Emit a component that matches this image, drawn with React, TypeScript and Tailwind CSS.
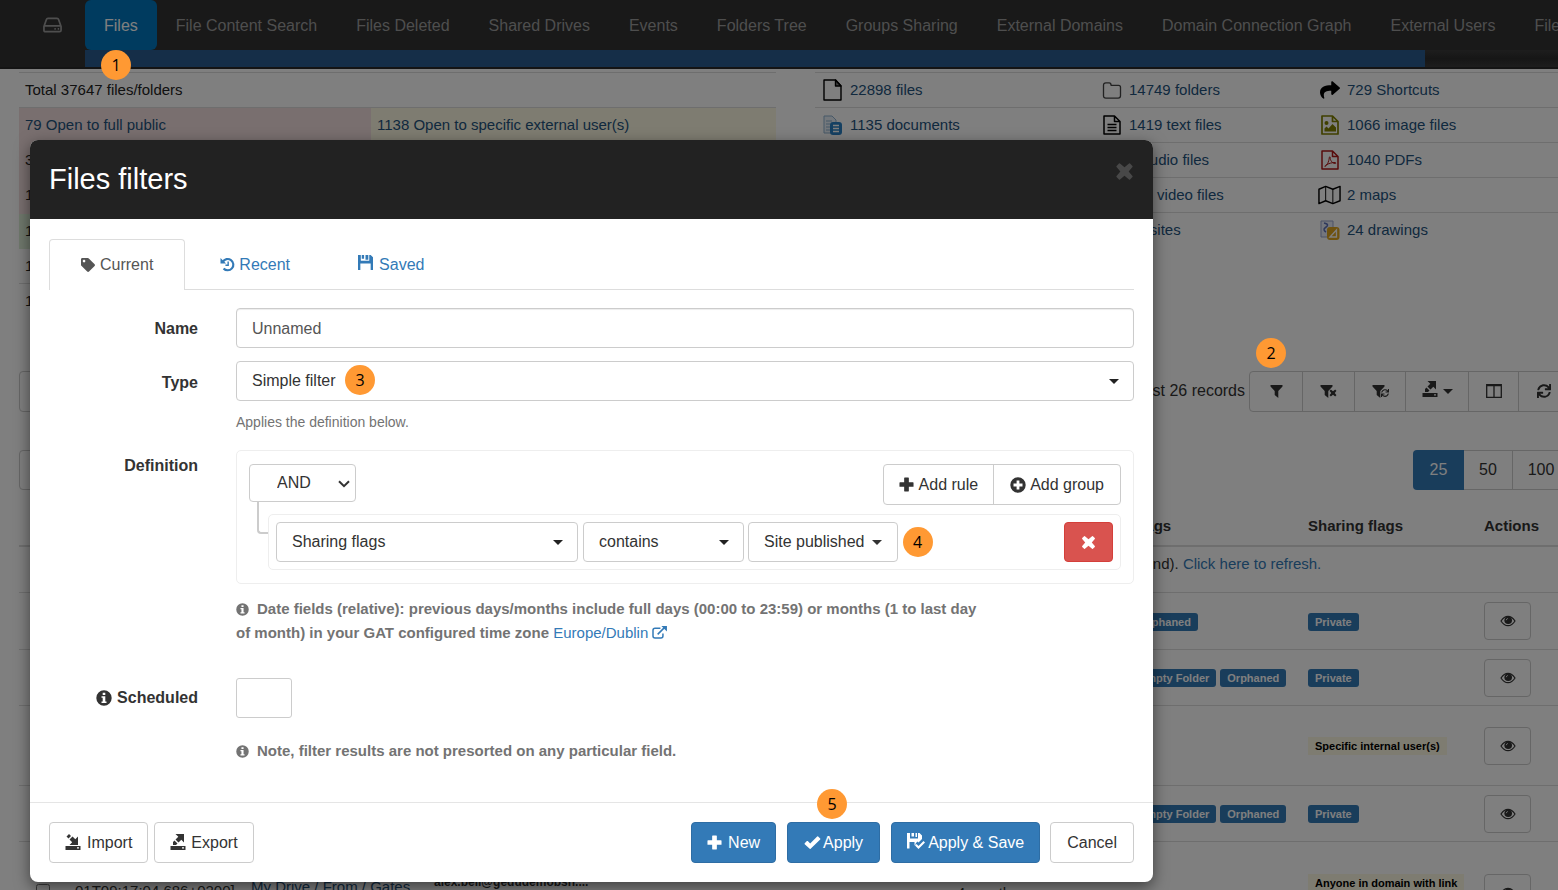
import React, { useState } from 'react';
import { FaTag, FaShare, FaSync } from 'react-icons/fa';

const NAV_ITEMS = [
  'File Content Search',
  'Files Deleted',
  'Shared Drives',
  'Events',
  'Folders Tree',
  'Groups Sharing',
  'External Domains',
  'Domain Connection Graph',
  'External Users',
  'File Operations',
];

interface IconProps {
  className?: string;
}

const Icons = {
  Drive: ({ className }: IconProps) => (
    <svg viewBox="0 0 20 16" className={className} fill="none" stroke="currentColor" strokeWidth="1.8" strokeLinejoin="round">
      <path d="M1 9.5 3.6 2.2Q4 1 5.2 1h9.6q1.2 0 1.6 1.2L19 9.500V13.500q0 1.500-1.500 1.500h-15Q1 15 1 13.500ZM1 9h18M12 12h1.500M15.500 12H17" />
    </svg>
  ),
  File: ({ className }: IconProps) => (
    <svg viewBox="0 0 19 22" className={className} fill="none" stroke="currentColor" strokeWidth="1.4" strokeLinejoin="round">
      <path d="M1 1h11.500L18 7v14H1Z" />
      <path d="M12.500 1v6H18Z" fill="currentColor" fillOpacity="0.5" />
    </svg>
  ),
  TextFile: ({ className }: IconProps) => (
    <svg viewBox="0 0 18 20" className={className} fill="none" stroke="currentColor" strokeWidth="1.5" strokeLinejoin="round">
      <path d="M1 1h10.500L17 6.500V19H1ZM11.500 1v5.500H17M4.500 9.500h9M4.500 12.500h9M4.500 15.500h9" />
    </svg>
  ),
  ImageFile: ({ className }: IconProps) => (
    <svg viewBox="0 0 18 20" className={className} fill="none" stroke="currentColor" strokeWidth="1.7" strokeLinejoin="round">
      <path d="M1 1h10.500L17 6.500V19H1ZM11.500 1v5.500H17" />
      <circle cx="5.5" cy="8" r="2" fill="currentColor" stroke="none" />
      <path d="M3.500 16.500v-3l2-2 2 2 4-4.500 3.500 3.500v4Z" fill="currentColor" stroke="none" />
    </svg>
  ),
  Pdf: ({ className }: IconProps) => (
    <svg viewBox="0 0 18 20" className={className} fill="none" stroke="currentColor" strokeWidth="1.5" strokeLinejoin="round">
      <path d="M1 1h10.500L17 6.500V19H1ZM11.500 1v5.500H17" />
      <path d="M4 16.500c1.500-.5 4-4.500 4.300-9 .2-1 1-1 .9 0-.2 2.500 2 6 5 6 1 0 .8-1-.2-1-3 0-6.500 1-9 2.500-1 .8-1.500 1.500-1 1.500Z" strokeWidth="1" />
    </svg>
  ),
  Folder: ({ className }: IconProps) => (
    <svg viewBox="0 0 20 18" className={className} fill="none" stroke="currentColor" strokeWidth="1.4" strokeLinejoin="round">
      <path d="M1 3.500Q1 1 3.500 1H7q2 0 2 2.500h8q2 0 2 2V14.500q0 2.500-2.500 2.500h-13Q1 17 1 14.500Z" />
    </svg>
  ),
  Map: ({ className }: IconProps) => (
    <svg viewBox="0 0 24 20" className={className} fill="none" stroke="currentColor" strokeWidth="1.5" strokeLinejoin="round">
      <path d="M1 4 8 1l7.500 3L23 1v15l-7.500 3L8 16l-7 3Z" />
      <path d="M8 1v15M15.500 4v15" strokeWidth="1" />
    </svg>
  ),
  Document: ({ className }: IconProps) => (
    <svg viewBox="0 0 20 20" className={className} fill="none">
      <path d="M1 1h8l4 4v13H1Z" fill="#e8f0f8" stroke="#8eb0cf" />
      <path d="M3 6h6M3 9h4M3 12h4M3 15h4" stroke="#8eb0cf" />
      <rect x="7" y="7" width="12" height="13" rx="3" fill="#2a81c4" />
      <path d="M10 10.500h6M10 13.500h6M10 16.500h6" stroke="#fff" strokeWidth="1.3" />
    </svg>
  ),
  Drawing: ({ className }: IconProps) => (
    <svg viewBox="0 0 20 20" className={className} fill="none">
      <path d="M1 1h12v16H1Z" fill="#e8ecf8" stroke="#9aa6cc" />
      <path d="M4 3c5 1 4 3 1.500 4.500S4 11 6 12" stroke="#5c70b8" strokeWidth="1.5" />
      <rect x="7" y="7" width="12.500" height="13" rx="3" fill="#dfa51f" />
      <path d="M10 17 16.500 10v7Z" stroke="#fff" strokeWidth="1.3" />
    </svg>
  ),
  Cross: ({ className }: IconProps) => (
    <svg viewBox="0 0 16 16" className={className} fill="currentColor">
      <path d="M4.200 1.300 8 4.500l3.800-3.200q.4-.4.900 0l2 2q.4.500 0 .9L11.500 8l3.200 3.800q.4.400 0 .9l-2 2q-.5.400-.9 0L8 11.500l-3.800 3.200q-.4.400-.9 0l-2-2q-.4-.5 0-.9L4.500 8 1.300 4.200q-.4-.4 0-.9l2-2q.5-.4.900 0Z" />
    </svg>
  ),
  Plus: ({ className }: IconProps) => (
    <svg viewBox="0 0 16 16" className={className} fill="currentColor">
      <path d="M6 .5h4q.5 0 .5.500v4.500H15q.5 0 .5.500v4q0 .5-.5.500h-4.500V15q0 .5-.5.500H6q-.5 0-.5-.5v-4.500H1q-.5 0-.5-.5V6q0-.5.500-.5h4.500V1Q5.500.5 6 .5Z" />
    </svg>
  ),
  PlusCircle: ({ className }: IconProps) => (
    <svg viewBox="0 0 16 16" className={className} fill="currentColor" fillRule="evenodd">
      <path d="M8 .3a7.700 7.700 0 1 1 0 15.400A7.700 7.700 0 0 1 8 .3ZM6.600 3.500v3.100H3.500v2.800h3.100v3.100h2.800V9.400h3.100V6.600H9.400V3.500Z" />
    </svg>
  ),
  Check: ({ className }: IconProps) => (
    <svg viewBox="0 0 18 16" className={className} fill="currentColor">
      <path d="M.7 8.800 3 6.500q.5-.4 1 0L6.500 9 14 1.500q.5-.4 1 0l2.200 2.200q.4.500 0 1L7 14.700q-.5.400-1 0L.7 9.800q-.4-.5 0-1Z" />
    </svg>
  ),
  History: ({ className }: IconProps) => (
    <svg viewBox="0 0 16 16" className={className} fill="none" stroke="currentColor">
      <path d="M3 5.200A6 6 0 1 1 3.800 12.200" strokeWidth="2.3" />
      <path d="M.5 1v6h6Z" fill="currentColor" stroke="none" />
      <path d="M8.700 4.800v4H5.800" strokeWidth="1.5" />
    </svg>
  ),
  Filter: ({ className }: IconProps) => (
    <svg viewBox="0 0 13 13" className={className} fill="currentColor">
      <path d="M.5 0h12v1.500L8.300 6v7L4.700 10V6L.5 1.500Z" />
    </svg>
  ),
  Chevron: ({ className }: IconProps) => (
    <svg viewBox="0 0 12 8" className={className} fill="none" stroke="currentColor" strokeWidth="2">
      <path d="m1 1.200 5 5 5-5" />
    </svg>
  ),
  Floppy: ({ className }: IconProps) => (
    <svg viewBox="0 0 16 16" className={className} fill="currentColor">
      <path d="M0 0h3v6h9V0h1.500L16 2.500V16h-2.500V9h-11v7H0ZM4 0h2.500v4H4ZM8 0h3v5H8Z" />
    </svg>
  ),
  FloppySaved: ({ className }: IconProps) => (
    <svg viewBox="0 0 18 16" className={className} fill="currentColor">
      <path d="M0 0h3v5.500h8V0h1.500L15 2.500V6l-3.500 3.500-1-1-2 2 .5.500-1.500 1.500V9H2.500v6.500H0ZM4.500 0H7v3.500H4.500ZM8.500 0h1.500v4H8.500Z" />
      <path d="m8 12.500 1.500-1.500 2 2 5-5L18 9.500 11.500 16Z" />
    </svg>
  ),
  Export: ({ className }: IconProps) => (
    <svg viewBox="0 0 16 16" className={className} fill="currentColor">
      <path fillRule="evenodd" d="M.5 12h15v4H.5ZM12 13.300v1.200h2v-1.200Z" />
      <path d="M5.500 0H14v8.500l-2.700-2.700L8.500 8.500 5.500 5.500l2.800-2.700ZM4.500 6.500 7.500 9.500 6 11H3V8Z" />
    </svg>
  ),
  Import: ({ className }: IconProps) => (
    <svg viewBox="0 0 16 16" className={className} fill="currentColor">
      <path fillRule="evenodd" d="M.5 12h15v4H.5ZM12 13.300v1.200h2v-1.200Z" />
      <path d="M13 2.500V11H4.500l2.700-2.700L4.500 5.500l3-3 2.800 2.800ZM4 0 6 2 3.500 4.500 1.500 2.500Z" />
    </svg>
  ),
  Eye: ({ className }: IconProps) => (
    <svg viewBox="0 0 16 12" className={className} fill="none" stroke="currentColor" strokeWidth="1.2">
      <path d="M1 6q3-4.700 7-4.700T15 6q-3 4.700-7 4.700T1 6Z" />
      <circle cx="8.2" cy="5.300" r="3.800" fill="currentColor" stroke="none" />
      <path d="M6.300 5.200Q6.500 3.700 7.800 3.400" stroke="#fff" strokeWidth="0.8" />
    </svg>
  ),
  Info: ({ className }: IconProps) => (
    <svg viewBox="0 0 16 16" className={className} fill="currentColor" fillRule="evenodd">
      <path d="M8 .3a7.700 7.700 0 1 1 0 15.400A7.700 7.700 0 0 1 8 .3ZM6.700 2.700v2.200h2.600V2.700ZM5.500 6.300v1.500h1.200v3.700H5.500V13h5v-1.500H9.300V6.300Z" />
    </svg>
  ),
  External: ({ className }: IconProps) => (
    <svg viewBox="0 0 16 14" className={className} fill="none" stroke="currentColor" strokeWidth="1.6">
      <path d="M9 2.500H3.200Q1 2.500 1 4.500v6.300Q1 13 3.200 13h6.300q2.200 0 2.200-2.200V8M6 9l7-7" />
      <path d="M10 0h6v6Z" fill="currentColor" stroke="none" />
    </svg>
  ),
  Columns: ({ className }: IconProps) => (
    <svg viewBox="0 0 16 14" className={className} fill="none" stroke="currentColor" strokeWidth="1.3">
      <path d="M.7.700h14.600v12.600H.7ZM8 .7v12.600M.7 1.600h14.600" />
    </svg>
  ),
};

const Caret = ({ className = '' }: IconProps) => (
  <svg viewBox="0 0 10 5" className={`h-[5px] w-[10px] ${className}`} fill="currentColor">
    <path d="M0 0h10L5 5Z" />
  </svg>
);

const Step = ({ n, className = '' }: { n: number; className?: string }) => (
  <span className={`flex size-[30px] items-center justify-center rounded-full bg-[#ff9933] font-['Open_Sans',sans-serif] text-base text-black ${className}`}>
    {n}
  </span>
);

const Tag = ({ children }: { children: React.ReactNode }) => (
  <span className="mr-1 inline-block rounded-[3px] bg-[#337ab7] px-[7px] text-[11px] leading-[18px] font-bold text-white">{children}</span>
);

const CreamTag = ({ children }: { children: React.ReactNode }) => (
  <span className="inline-block bg-[#fcf8e3] px-[7px] text-[11px] leading-[18px] font-bold text-black">{children}</span>
);

const Dropdown = ({ id, label, value, className = '' }: { id: string; label?: string; value: string; className?: string }) => (
  <div className={`relative ${className}`}>
    <select id={id} aria-label={label} className="h-10 w-full appearance-none rounded border border-[#ccc] bg-white pr-8 pl-[15px] text-[#333]">
      <option>{value}</option>
    </select>
    <Caret className="pointer-events-none absolute top-[18px] right-[15px] text-[#222]" />
  </div>
);

interface FileKind {
  icon: React.FC<IconProps>;
  iconClass: string;
  label: string;
}

const FILE_KINDS: (FileKind | null)[][] = [
  [
    { icon: Icons.File, iconClass: 'h-[22px] w-[19px] text-black', label: '22898 files' },
    { icon: Icons.Folder, iconClass: 'h-[17px] w-[20px] text-[#444]', label: '14749 folders' },
    { icon: FaShare, iconClass: 'size-[20px] text-black', label: '729 Shortcuts' },
  ],
  [
    { icon: Icons.Document, iconClass: 'size-[20px]', label: '1135 documents' },
    { icon: Icons.TextFile, iconClass: 'h-[20px] w-[18px] text-black', label: '1419 text files' },
    { icon: Icons.ImageFile, iconClass: 'h-[20px] w-[18px] text-[#808000]', label: '1066 image files' },
  ],
  [
    null,
    { icon: Icons.File, iconClass: 'h-[20px] w-[18px] text-black', label: '5 audio files' },
    { icon: Icons.Pdf, iconClass: 'h-[20px] w-[18px] text-[#b01818]', label: '1040 PDFs' },
  ],
  [
    null,
    { icon: Icons.File, iconClass: 'h-[20px] w-[18px] text-black', label: '112 video files' },
    { icon: Icons.Map, iconClass: 'h-[20px] w-[24px] text-black', label: '2 maps' },
  ],
  [
    null,
    { icon: Icons.File, iconClass: 'h-[20px] w-[18px] text-black', label: '14 sites' },
    { icon: Icons.Drawing, iconClass: 'size-[20px]', label: '24 drawings' },
  ],
];

const ROWS = [
  { height: 'h-[57px]', flags: ['Orphaned'], sharing: 'Private' },
  { height: 'h-[56px]', flags: ['Empty Folder', 'Orphaned'], sharing: 'Private' },
  { height: 'h-[80px]', flags: [], sharing: 'Specific internal user(s)' },
  { height: 'h-[56px]', flags: ['Empty Folder', 'Orphaned'], sharing: 'Private' },
];

const ViewButton = () => (
  <button type="button" aria-label="View" className="flex h-[38px] w-[47px] items-center justify-center rounded border border-[#ccc] text-[#333]">
    <Icons.Eye className="h-3 w-4" />
  </button>
);

const NavBar = () => (
  <nav className="h-[69px] bg-[#323232]">
    <div className="flex h-[50px] text-base whitespace-nowrap text-[#9d9d9d]">
      <a href="#drive" aria-label="Drive" className="flex w-[85px] shrink-0 items-center pl-[43px]">
        <Icons.Drive className="h-4 w-[19px]" />
      </a>
      <div className="relative">
        <a href="#files" className="flex h-full items-center rounded-md bg-[#0077bf] px-[19px] pt-[2px] text-white">Files</a>
        <Step n={1} className="absolute top-[50px] left-4 z-30" />
      </div>
      {NAV_ITEMS.map((item) => (
        <a key={item} href="#nav" className="flex items-center pt-[2px] pr-5 pl-[19px]">{item}</a>
      ))}
    </div>
    <div className="ml-[85px] flex h-[17px] bg-gradient-to-b from-[#3c3c3c] via-[#2c2c2c] to-[#3c3c3c]">
      <div className="w-[91%] bg-[#2b5d90]" />
    </div>
    <div className="h-[2px] bg-[#282828]" />
  </nav>
);

const Summary = () => (
  <div className="grid grid-cols-[757fr_743fr] items-start gap-[39px] pt-[3px] pl-[19px] text-[15px]">
    <table className="w-full table-fixed text-[#222]">
      <colgroup>
        <col className="w-[352px]" />
        <col />
      </colgroup>
      <tbody>
        <tr className="h-[35px] border-t border-[#ddd]">
          <td colSpan={2} className="px-[6px]">Total 37647 files/folders</td>
        </tr>
        <tr className="h-[35px] border-t border-[#ddd]">
          <td className="bg-[#f2dede] px-[6px]"><a href="#public" className="text-[#23527c]">79 Open to full public</a></td>
          <td className="bg-[#fcf8e3] px-[6px]"><a href="#external" className="text-[#23527c]">1138 Open to specific external user(s)</a></td>
        </tr>
        <tr className="h-[35px] bg-[#f2dede]"><td colSpan={2} className="px-[6px]">3</td></tr>
        <tr className="h-[36px] bg-[#f2dede]"><td colSpan={2} className="px-[6px]">1</td></tr>
        <tr className="h-[35px] bg-[#dff0d8]"><td colSpan={2} className="px-[6px]">1</td></tr>
        <tr className="h-[35px]"><td colSpan={2} className="px-[6px]">1</td></tr>
        <tr className="h-[35px] border-t border-[#ddd]"><td colSpan={2} className="px-[6px]">1</td></tr>
      </tbody>
    </table>
    <table className="w-full table-fixed">
      <colgroup>
        <col className="w-[279px]" />
        <col className="w-[218px]" />
        <col />
      </colgroup>
      <tbody>
        {FILE_KINDS.map((row, i) => (
          <tr key={i} className="h-[35px] border-t border-[#ddd]">
            {row.map((kind, j) => (
              <td key={j} className="pl-[6px]">
                {kind && (
                  <a href="#kind" className="flex items-center gap-[6px] text-[#23527c]">
                    <span className="flex w-[23px] justify-center">
                      <kind.icon className={kind.iconClass} />
                    </span>
                    {kind.label}
                  </a>
                )}
              </td>
            ))}
          </tr>
        ))}
      </tbody>
    </table>
  </div>
);

const Records = () => (
  <div className="-mr-3 pl-[19px] text-base text-[#333]">
    <div className="flex items-center justify-between">
      <button type="button" aria-label="Bulk actions" className="h-[41px] w-[120px] rounded border border-[#ccc]" />
      <div className="flex items-center gap-1">
        <span>Latest 26 records</span>
        <div className="flex h-[41px] divide-x divide-[#ccc] rounded border border-[#ccc]">
          <button type="button" aria-label="Filter" className="relative flex w-[53px] items-center justify-center">
            <Icons.Filter className="size-[13px]" />
            <Step n={2} className="absolute -top-[34px] left-[6px] z-30" />
          </button>
          <button type="button" aria-label="Clear filter" className="flex w-[52px] items-center justify-center">
            <Icons.Filter className="size-[13px]" />
            <Icons.Cross className="-ml-1 mt-1 size-[8px]" />
          </button>
          <button type="button" aria-label="Reload filter" className="flex w-[51px] items-center justify-center">
            <Icons.Filter className="size-[13px]" />
            <FaSync className="-ml-1 mt-1 size-[8px]" />
          </button>
          <button type="button" aria-label="Export records" className="flex w-[63px] items-center justify-center gap-[5px]">
            <Icons.Export className="mb-1 size-4" />
            <Caret />
          </button>
          <button type="button" aria-label="Columns" className="flex w-[50px] items-center justify-center">
            <Icons.Columns className="h-[14px] w-4" />
          </button>
          <button type="button" aria-label="Refresh" className="flex w-[50px] items-center justify-center">
            <FaSync className="size-[14px]" />
          </button>
        </div>
      </div>
    </div>

    <div className="mt-[38px] flex justify-between">
      <button type="button" aria-label="Select all" className="h-10 w-[120px] rounded border border-[#ccc]" />
      <div className="flex h-10">
        <button type="button" className="w-[51px] rounded-l bg-[#337ab7] text-white">25</button>
        <button type="button" className="w-[49px] border-y border-r border-[#ccc]">50</button>
        <button type="button" className="w-[57px] rounded-r border-y border-r border-[#ccc]">100</button>
      </div>
    </div>

    <table className="mt-[18px] w-full table-fixed text-left text-[15px]">
      <colgroup>
        <col className="w-[46px]" />
        <col className="w-[176px]" />
        <col className="w-[183px]" />
        <col className="w-[169px]" />
        <col className="w-[172px]" />
        <col className="w-[182px]" />
        <col className="w-[175px]" />
        <col className="w-[176px]" />
        <col className="w-[176px]" />
        <col />
      </colgroup>
      <thead>
        <tr className="h-[38px] border-b-2 border-[#ddd]">
          <th colSpan={7} />
          <th className="pl-[10px]">Flags</th>
          <th className="pl-[10px]">Sharing flags</th>
          <th className="pl-[10px]">Actions</th>
        </tr>
      </thead>
      <tbody>
        <tr className="h-[47px] border-b border-[#ddd]">
          <td colSpan={7} />
          <td colSpan={3} className="pb-[10px] pl-[10px]">found). <a href="#refresh" className="text-[#337ab7]">Click here to refresh.</a></td>
        </tr>
        {ROWS.map((row, i) => (
          <tr key={i} className={`border-b border-[#ddd] ${row.height}`}>
            <td colSpan={7} />
            <td className="pl-[10px] whitespace-nowrap">
              {row.flags.map((flag) => <Tag key={flag}>{flag}</Tag>)}
            </td>
            <td className="pl-[10px]">
              {row.sharing === 'Private' ? <Tag>Private</Tag> : <CreamTag>{row.sharing}</CreamTag>}
            </td>
            <td className="pl-[10px]"><ViewButton /></td>
          </tr>
        ))}
        <tr className="h-[102px] whitespace-nowrap">
          <td className="pl-[17px]"><input type="checkbox" aria-label="Select row" className="size-[14px]" /></td>
          <td className="pb-1 pl-[10px]">01T09:17:04.686+0200]</td>
          <td className="pb-3 pl-[10px]"><a href="#folder" className="text-[#23527c]">My Drive / From / Gates</a></td>
          <td className="pb-[22px] pl-[10px] text-xs font-bold">alex.bell@gedudemobsn....</td>
          <td className="pl-[10px]">—</td>
          <td />
          <td className="pl-[10px]">4 months ago</td>
          <td />
          <td className="pb-[22px] pl-[10px]"><CreamTag>Anyone in domain with link</CreamTag></td>
          <td className="pl-[10px]"><ViewButton /></td>
        </tr>
      </tbody>
    </table>
  </div>
);

const FilterDialog = () => {
  const [name, setName] = useState('Unnamed');

  return (
    <div role="dialog" aria-labelledby="dialog-title" className="w-full max-w-[1123px] overflow-hidden rounded-lg bg-white text-base text-[#333] shadow-[0_5px_15px_rgba(0,0,0,0.5)]">
      <div className="flex h-[79px] items-center justify-between bg-[#222] px-[19px]">
        <h4 id="dialog-title" className="text-[29px] text-white">Files filters</h4>
        <button type="button" aria-label="Close" className="mb-4 text-[#484848]">
          <Icons.Cross className="size-[19px]" />
        </button>
      </div>

      <div className="px-[19px] pt-5">
        <div className="flex h-[51px] gap-[2px] border-b border-[#ddd]">
          <button type="button" className="-mb-px flex items-center gap-[5px] rounded-t border border-b-0 border-[#ddd] bg-white px-[31px] text-[#555]">
            <FaTag className="size-[14px]" />
            Current
          </button>
          <button type="button" className="flex items-center gap-1 px-[33px] pt-px text-[#337ab7]">
            <Icons.History className="size-[15px]" />
            Recent
          </button>
          <button type="button" className="flex items-center gap-[6px] px-[33px] pt-px text-[#337ab7]">
            <Icons.Floppy className="mb-1 size-[15px]" />
            Saved
          </button>
        </div>

        <div className="grid grid-cols-[149px_1fr] gap-x-[38px] pt-[18px]">
          <label htmlFor="filter-name" className="pt-px text-right leading-10 font-bold">Name</label>
          <input
            id="filter-name"
            type="text"
            value={name}
            onChange={(e) => setName(e.target.value)}
            className="h-10 w-full rounded border border-[#ccc] px-[15px] pt-px text-[#555] shadow-[inset_0_1px_1px_rgba(0,0,0,0.075)]"
          />

          <label htmlFor="filter-type" className="mt-[13px] pt-px text-right leading-10 font-bold">Type</label>
          <div className="mt-[12px]">
            <div className="relative">
              <Dropdown id="filter-type" value="Simple filter" />
              <Step n={3} className="absolute top-1 left-[109px]" />
            </div>
            <p className="pt-[9px] text-sm leading-6 text-[#737373]">Applies the definition below.</p>
          </div>

          <span className="mt-4 pt-1 text-right leading-6 font-bold">Definition</span>
          <div className="mt-4">
            <div className="rounded-[5px] border border-[#eee] px-3 py-[13px]">
              <div className="flex items-start justify-between">
                <div className="relative">
                  <select aria-label="Group condition" className="h-[38px] w-[107px] appearance-none rounded border border-[#ccc] bg-white pl-[27px]">
                    <option>AND</option>
                    <option>OR</option>
                  </select>
                  <Icons.Chevron className="pointer-events-none absolute top-4 right-[6px] h-2 w-3" />
                  <span className="absolute top-[37px] left-2 h-[33px] w-[11px] rounded-bl border-b-2 border-l-2 border-[#ccc]" />
                </div>
                <div className="flex h-[41px] divide-x divide-[#ccc] rounded border border-[#ccc]">
                  <button type="button" className="flex items-center gap-[5px] px-[15px]">
                    <Icons.Plus className="size-[15px]" />
                    Add rule
                  </button>
                  <button type="button" className="flex items-center gap-1 px-4">
                    <Icons.PlusCircle className="size-4" />
                    Add group
                  </button>
                </div>
              </div>
              <div className="mt-[9px] ml-[19px] flex items-center rounded-[5px] border border-[#eee] p-[7px]">
                <Dropdown id="rule-field" label="Field" value="Sharing flags" className="w-[302px]" />
                <Dropdown id="rule-operator" label="Operator" value="contains" className="ml-[5px] w-[161px]" />
                <button type="button" className="ml-1 flex h-10 items-center gap-[7px] rounded border border-[#ccc] px-[15px]">
                  Site published
                  <Caret />
                </button>
                <Step n={4} className="ml-[5px]" />
                <button type="button" aria-label="Delete rule" className="ml-auto flex h-10 w-[49px] items-center justify-center rounded border border-[#d43f3a] bg-[#d9534f] text-white">
                  <Icons.Cross className="size-[15px]" />
                </button>
              </div>
            </div>
            <p className="max-w-[748px] pt-[13px] text-[15px] leading-6 font-bold text-[#737373]">
              <Icons.Info className="mr-2 mb-[2px] inline size-[13px]" />
              Date fields (relative): previous days/months include full days (00:00 to 23:59) or months (1 to last day of month) in your GAT configured time zone{' '}
              <a href="#timezone" className="font-normal text-[#337ab7]">
                Europe/Dublin <Icons.External className="mb-1 inline h-[13px] w-[15px]" />
              </a>
            </p>
          </div>

          <label htmlFor="scheduled" className="mt-[33px] flex h-10 items-center justify-end gap-[5px] font-bold">
            <Icons.Info className="size-4" />
            Scheduled
          </label>
          <div className="mt-[33px]">
            <input id="scheduled" type="checkbox" className="block h-10 w-14 appearance-none rounded-[3px] border border-[#ccc] bg-white" />
            <p className="pt-[21px] text-[15px] leading-6 font-bold text-[#737373]">
              <Icons.Info className="mr-2 mb-[2px] inline size-[13px]" />
              Note, filter results are not presorted on any particular field.
            </p>
          </div>
        </div>
      </div>

      <div className="mt-[39px] flex border-t border-[#e5e5e5] px-[19px] py-[19px]">
        <button type="button" className="flex h-[41px] items-center gap-[6px] rounded border border-[#ccc] px-[15px]">
          <Icons.Import className="mb-[2px] size-4" />
          Import
        </button>
        <button type="button" className="ml-[6px] flex h-[41px] items-center gap-[5px] rounded border border-[#ccc] px-[15px]">
          <Icons.Export className="mb-[2px] size-4" />
          Export
        </button>
        <button type="button" className="ml-auto flex h-[41px] items-center gap-[6px] rounded border border-[#2e6da4] bg-[#337ab7] px-[15px] text-white">
          <Icons.Plus className="size-[15px]" />
          New
        </button>
        <button type="button" className="relative ml-[11px] flex h-[41px] items-center gap-[2px] rounded border border-[#2e6da4] bg-[#337ab7] px-4 text-white">
          <Icons.Check className="h-[15px] w-[17px]" />
          Apply
          <Step n={5} className="absolute -top-[34px] left-[29px]" />
        </button>
        <button type="button" className="ml-[11px] flex h-[41px] items-center gap-[3px] rounded border border-[#2e6da4] bg-[#337ab7] px-[15px] text-white">
          <Icons.FloppySaved className="mb-1 h-4 w-[18px]" />
          Apply &amp; Save
        </button>
        <button type="button" className="ml-[10px] h-[41px] rounded border border-[#ccc] px-4">Cancel</button>
      </div>
    </div>
  );
};

export default function App() {
  return (
    <div className="relative h-screen overflow-hidden bg-white font-['Liberation_Sans',Arial,sans-serif]">
      <NavBar />
      <Summary />
      <div className="pt-[52px]">
        <Records />
      </div>
      <div className="absolute inset-0 z-20 bg-black/50 pt-[140px] pl-[30px]">
        <FilterDialog />
      </div>
    </div>
  );
}
